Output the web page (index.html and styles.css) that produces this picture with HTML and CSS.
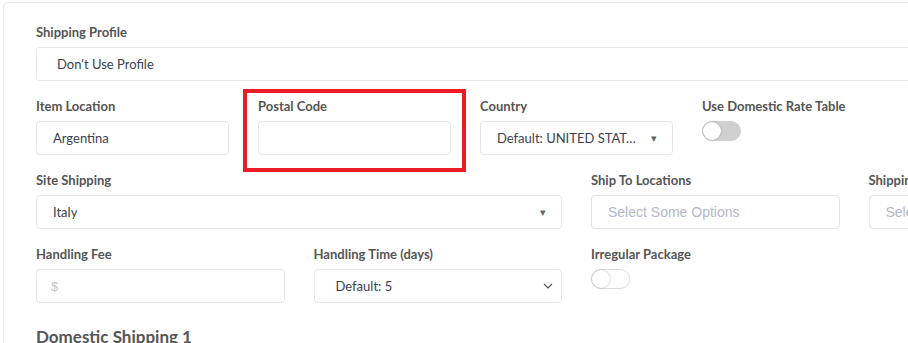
FILE: index.html
```html
<!DOCTYPE html>
<html lang="en">
<head>
    <meta charset="UTF-8">
    <title>Shipping</title>
    <link rel="stylesheet" href="styles.css">
</head>
<body>
    <div class="card">
        <!-- profile -->
        <div class="field">
            <label class="field-label">Shipping Profile</label>
            <div class="input profile">Don't Use Profile</div>
        </div>

        <!-- location row -->
        <div class="row five">
            <div class="field">
                <label class="field-label">Item Location</label>
                <div class="input">Argentina</div>
            </div>
            <div class="field highlight">
                <label class="field-label">Postal Code</label>
                <div class="input"></div>
            </div>
            <div class="field">
                <label class="field-label">Country</label>
                <div class="input select">
                    <span class="value">Default: UNITED STAT…</span>
                    <span class="caret">▾</span>
                </div>
            </div>
            <div class="field">
                <label class="field-label">Use Domestic Rate Table</label>
                <div class="toggle filled"><span class="knob"></span></div>
            </div>
        </div>

        <!-- site row -->
        <div class="row four">
            <div class="field span-2">
                <label class="field-label">Site Shipping</label>
                <div class="input select">
                    <span class="value">Italy</span>
                    <span class="caret">▾</span>
                </div>
            </div>
            <div class="field">
                <label class="field-label">Ship To Locations</label>
                <div class="input multi"><span class="placeholder">Select Some Options</span></div>
            </div>
            <div class="field">
                <label class="field-label">Shipping Excluded Locations</label>
                <div class="input multi"><span class="placeholder">Select Some Options</span></div>
            </div>
        </div>

        <!-- handling row -->
        <div class="row four">
            <div class="field">
                <label class="field-label">Handling Fee</label>
                <div class="input fee"><span class="dollar">$</span></div>
            </div>
            <div class="field">
                <label class="field-label">Handling Time (days)</label>
                <div class="input select native">
                    <span class="value">Default: 5</span>
                    <svg class="chevron" width="10" height="6" viewBox="0 0 10 6">
                        <path d="M1 1 L5 5 L9 1" fill="none" stroke="#555" stroke-width="1.2"/>
                    </svg>
                </div>
            </div>
            <div class="field">
                <label class="field-label">Irregular Package</label>
                <div class="toggle"><span class="knob"></span></div>
            </div>
        </div>

        <h3 class="section-title">Domestic Shipping 1</h3>
    </div>
</body>
</html>
```

FILE: styles.css
```css
body {
    margin: 0;
    overflow: hidden;
    background: #fff;
    font-family: Lato, "Open Sans", sans-serif;
}

.card {
    margin: 2px 0 0 3px;
    width: 1180px;
    border: 1px solid #e6eaed;
    border-radius: 4px;
    padding: 20px 32px 40px;
}

.field {
    position: relative;
    margin-bottom: 16px;
    width: 1081px;
}

.row {
    display: grid;
    column-gap: 29px;
    width: 1081px;
}

.row .field {
    width: auto;
}

.five {
    grid-template-columns: repeat(5, 1fr);
}

.four {
    grid-template-columns: repeat(4, 1fr);
}

.span-2 {
    grid-column: span 2;
}

.field-label {
    display: block;
    font-size: 13px;
    font-weight: bold;
    line-height: 18px;
    color: #555;
    margin-bottom: 6px;
    white-space: nowrap;
}

.input {
    box-sizing: border-box;
    height: 34px;
    border: 1px solid #e2e7eb;
    border-radius: 4px;
    padding: 0 16px;
    display: flex;
    align-items: center;
    font-size: 13px;
    color: #3b3f50;
    background: #fff;
}

.input.profile {
    padding-left: 20px;
}

.select {
    justify-content: space-between;
}

.select .value {
    white-space: nowrap;
    overflow: hidden;
}

.caret {
    font-size: 11px;
    color: #666;
    margin-right: -1px;
}

.native {
    padding-left: 21px;
    padding-right: 8px;
}

.multi .placeholder {
    font-family: "Liberation Sans", Arial, sans-serif;
    font-size: 14px;
    color: #b4b7c9;
}

.fee {
    padding-left: 14px;
}

.dollar {
    font-family: "Liberation Sans", Arial, sans-serif;
    font-size: 13px;
    color: #c4c4c4;
}

.toggle {
    box-sizing: border-box;
    width: 39px;
    height: 20px;
    border-radius: 10px;
    border: 1px solid #dcdcdc;
    background: #fff;
    position: relative;
}

.toggle.filled {
    background: #d0d0d0;
    border-color: #d0d0d0;
}

.knob {
    position: absolute;
    left: 0;
    top: 0;
    width: 18px;
    height: 18px;
    border-radius: 50%;
    background: #fff;
    box-shadow: 0 0 2px rgba(0, 0, 0, 0.35);
}

/* red outline drawn over the postal code field */
.highlight::after {
    content: "";
    position: absolute;
    left: -15px;
    right: -15px;
    top: -8px;
    bottom: -17px;
    border: 4px solid #ed1c24;
}

.section-title {
    margin: 7px 0 0;
    font-size: 17px;
    line-height: 22px;
    font-weight: bold;
    color: #555;
}
```
